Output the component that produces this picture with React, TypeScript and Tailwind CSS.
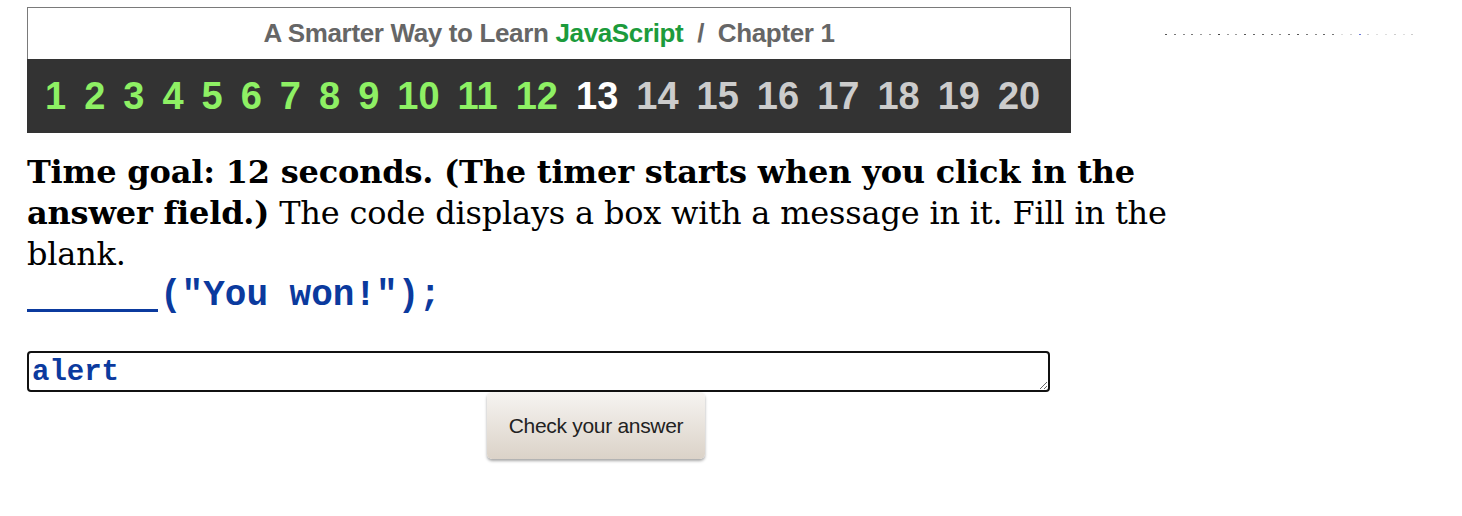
import React from 'react'

const chapters = Array.from({ length: 20 }, (_, i) => i + 1)

// little row of dots top right of the page
const dotColors = [
    '#555', '#777', '#888', '#777', '#999', '#999', '#444', '#999', '#999', '#555',
    '#666', '#666', '#777', '#888', '#666', '#555', '#777', '#888', '#666', '#777',
    '#ddd', '#ccc', '#6a78d8', '#ccc', '#ddd', '#ddd', '#ccc', '#ddd', '#ccc',
]

const numColor = (n: number) => {
    if (n < 13) return 'text-[#8ef064]'
    if (n === 13) return 'text-white'
    return 'text-[#cccccc]'
}

const App: React.FC = () => {
    return <div className="pl-[27px] pt-[7px] bg-white min-h-[516px]">
        <div className="flex items-start">
            <div className="w-[1044px]">
                <div className="h-[52px] border border-b-0 border-[#7a7a7a] bg-white flex items-center justify-center font-['Liberation_Sans',sans-serif] font-bold text-[26px] text-[#666] tracking-[-0.35px]">
                    <span>A Smarter Way to Learn&nbsp;</span>
                    <span className="text-[#1c9b3c]">JavaScript</span>
                    <span>&nbsp;&nbsp;/&nbsp;&nbsp;Chapter 1</span>
                </div>
                <div className="h-[74px] bg-[#333333] flex items-center gap-[18px] pl-[18px] font-['Liberation_Sans',sans-serif] font-bold text-[38px] leading-none">
                    {chapters.map(n => <span key={n} className={numColor(n)}>{n}</span>)}
                </div>
            </div>
            <div className="ml-[94px] mt-[27px] flex gap-[6.8px]">
                {dotColors.map((c, i) => <span key={i} className="block w-[2px] h-[1px]" style={{ backgroundColor: c }} />)}
            </div>
        </div>

        <p className="mt-[19px] w-[1150px] font-['DejaVu_Serif',serif] text-[32px] leading-[41px] tracking-[-0.2px] text-black">
            <b>Time goal: 12 seconds. (The timer starts when you click in the answer field.)</b> The code displays a box with a message in it. Fill in the blank.
        </p>

        <div className="font-['Liberation_Mono',monospace] font-bold text-[36px] leading-[41px] text-[#0b3a9e] whitespace-pre">
            <span className="inline-block w-[131px] h-0 border-b-[3px] border-[#0b3a9e] align-[-7px] mr-[2px]" />("You won!");
        </div>

        <textarea
            className="block mt-[35px] w-[1023px] h-[41px] border-2 border-[#111] rounded-[4px] px-[3px] pt-[3px] pb-0 overflow-hidden font-['Liberation_Mono',monospace] font-bold text-[29px] leading-[34px] text-[#0b3a9e] bg-white outline-none"
            defaultValue="alert"
        />

        <button className="block ml-[460px] w-[218px] h-[67px] rounded-[5px] bg-gradient-to-b from-[#f6f4f1] to-[#dbd2c8] shadow-[0_2px_3px_rgba(0,0,0,0.35)] font-['Liberation_Sans',sans-serif] text-[21px] text-[#222] tracking-[-0.3px]">
            Check your answer
        </button>
    </div>
}

export default App
